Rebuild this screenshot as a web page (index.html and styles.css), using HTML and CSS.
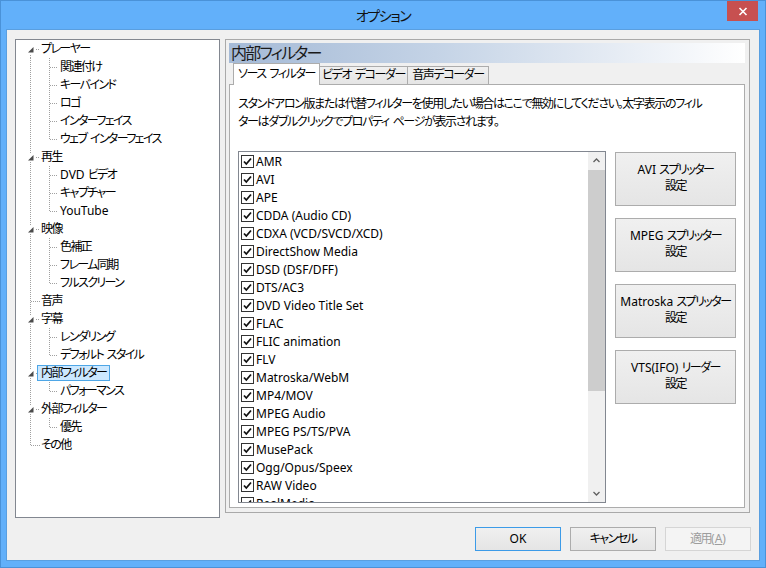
FILE: index.html
```html
<!DOCTYPE html>
<html lang="ja">
<head>
<meta charset="utf-8">
<title>オプション</title>
<link rel="stylesheet" href="styles.css">
</head>
<body>
<div class="window">
  <div class="titlebar">
    <div class="title">オプション</div>
    <div class="close"><svg width="10" height="9" viewBox="0 0 10 9"><path d="M1.5 1 L8.5 8 M8.5 1 L1.5 8" stroke="#fff" stroke-width="1.6" fill="none"/></svg></div>
  </div>
  <div class="client">
    <div class="main">
      <ul class="tree">
        <li class="first"><span class="exp"><svg width="9" height="9" viewBox="0 0 9 9"><polygon points="7.5,2 7.5,7.5 2,7.5" fill="#4a4a4a"/></svg></span><span class="label">プレーヤー</span></li>
        <li class="child"><span class="label">関連付け</span></li>
        <li class="child"><span class="label">キーバインド</span></li>
        <li class="child"><span class="label">ロゴ</span></li>
        <li class="child"><span class="label">インターフェイス</span></li>
        <li class="child end"><span class="label">ウェブ インターフェイス</span></li>
        <li class="parent"><span class="exp"><svg width="9" height="9" viewBox="0 0 9 9"><polygon points="7.5,2 7.5,7.5 2,7.5" fill="#4a4a4a"/></svg></span><span class="label">再生</span></li>
        <li class="child"><span class="label"><span class="en">DVD </span>ビデオ</span></li>
        <li class="child"><span class="label">キャプチャー</span></li>
        <li class="child end"><span class="label en">YouTube</span></li>
        <li class="parent"><span class="exp"><svg width="9" height="9" viewBox="0 0 9 9"><polygon points="7.5,2 7.5,7.5 2,7.5" fill="#4a4a4a"/></svg></span><span class="label">映像</span></li>
        <li class="child"><span class="label">色補正</span></li>
        <li class="child"><span class="label">フレーム同期</span></li>
        <li class="child end"><span class="label">フルスクリーン</span></li>
        <li class="leaf"><span class="label">音声</span></li>
        <li class="parent"><span class="exp"><svg width="9" height="9" viewBox="0 0 9 9"><polygon points="7.5,2 7.5,7.5 2,7.5" fill="#4a4a4a"/></svg></span><span class="label">字幕</span></li>
        <li class="child"><span class="label">レンダリング</span></li>
        <li class="child end"><span class="label">デフォルト スタイル</span></li>
        <li class="parent"><span class="exp"><svg width="9" height="9" viewBox="0 0 9 9"><polygon points="7.5,2 7.5,7.5 2,7.5" fill="#4a4a4a"/></svg></span><span class="label selected">内部フィルター</span></li>
        <li class="child end"><span class="label">パフォーマンス</span></li>
        <li class="parent"><span class="exp"><svg width="9" height="9" viewBox="0 0 9 9"><polygon points="7.5,2 7.5,7.5 2,7.5" fill="#4a4a4a"/></svg></span><span class="label">外部フィルター</span></li>
        <li class="child end"><span class="label">優先</span></li>
        <li class="leaf last"><span class="label">その他</span></li>
      </ul>
      <div class="page">
        <div class="page-header">内部フィルター</div>
        <div class="tabs">
          <div class="tab active">ソース フィルター</div>
          <div class="tab t2">ビデオ デコーダー</div>
          <div class="tab t3">音声デコーダー</div>
        </div>
        <div class="tabpanel">
          <p class="desc">スタンドアロン版または代替フィルターを使用したい場合はここで無効にしてください。太字表示のフィル<br>ターはダブルクリックでプロパティ ページが表示されます。</p>
          <div class="filters">
            <div class="listbox">
              <ul class="items">
                <li><span class="cb"><svg width="11" height="11" viewBox="0 0 11 11"><path d="M2 5.5 L4.3 8 L9 2.5" stroke="#111" stroke-width="1.8" fill="none"/></svg></span>AMR</li>
                <li><span class="cb"><svg width="11" height="11" viewBox="0 0 11 11"><path d="M2 5.5 L4.3 8 L9 2.5" stroke="#111" stroke-width="1.8" fill="none"/></svg></span>AVI</li>
                <li><span class="cb"><svg width="11" height="11" viewBox="0 0 11 11"><path d="M2 5.5 L4.3 8 L9 2.5" stroke="#111" stroke-width="1.8" fill="none"/></svg></span>APE</li>
                <li><span class="cb"><svg width="11" height="11" viewBox="0 0 11 11"><path d="M2 5.5 L4.3 8 L9 2.5" stroke="#111" stroke-width="1.8" fill="none"/></svg></span>CDDA (Audio CD)</li>
                <li><span class="cb"><svg width="11" height="11" viewBox="0 0 11 11"><path d="M2 5.5 L4.3 8 L9 2.5" stroke="#111" stroke-width="1.8" fill="none"/></svg></span>CDXA (VCD/SVCD/XCD)</li>
                <li><span class="cb"><svg width="11" height="11" viewBox="0 0 11 11"><path d="M2 5.5 L4.3 8 L9 2.5" stroke="#111" stroke-width="1.8" fill="none"/></svg></span>DirectShow Media</li>
                <li><span class="cb"><svg width="11" height="11" viewBox="0 0 11 11"><path d="M2 5.5 L4.3 8 L9 2.5" stroke="#111" stroke-width="1.8" fill="none"/></svg></span>DSD (DSF/DFF)</li>
                <li><span class="cb"><svg width="11" height="11" viewBox="0 0 11 11"><path d="M2 5.5 L4.3 8 L9 2.5" stroke="#111" stroke-width="1.8" fill="none"/></svg></span>DTS/AC3</li>
                <li><span class="cb"><svg width="11" height="11" viewBox="0 0 11 11"><path d="M2 5.5 L4.3 8 L9 2.5" stroke="#111" stroke-width="1.8" fill="none"/></svg></span>DVD Video Title Set</li>
                <li><span class="cb"><svg width="11" height="11" viewBox="0 0 11 11"><path d="M2 5.5 L4.3 8 L9 2.5" stroke="#111" stroke-width="1.8" fill="none"/></svg></span>FLAC</li>
                <li><span class="cb"><svg width="11" height="11" viewBox="0 0 11 11"><path d="M2 5.5 L4.3 8 L9 2.5" stroke="#111" stroke-width="1.8" fill="none"/></svg></span>FLIC animation</li>
                <li><span class="cb"><svg width="11" height="11" viewBox="0 0 11 11"><path d="M2 5.5 L4.3 8 L9 2.5" stroke="#111" stroke-width="1.8" fill="none"/></svg></span>FLV</li>
                <li><span class="cb"><svg width="11" height="11" viewBox="0 0 11 11"><path d="M2 5.5 L4.3 8 L9 2.5" stroke="#111" stroke-width="1.8" fill="none"/></svg></span>Matroska/WebM</li>
                <li><span class="cb"><svg width="11" height="11" viewBox="0 0 11 11"><path d="M2 5.5 L4.3 8 L9 2.5" stroke="#111" stroke-width="1.8" fill="none"/></svg></span>MP4/MOV</li>
                <li><span class="cb"><svg width="11" height="11" viewBox="0 0 11 11"><path d="M2 5.5 L4.3 8 L9 2.5" stroke="#111" stroke-width="1.8" fill="none"/></svg></span>MPEG Audio</li>
                <li><span class="cb"><svg width="11" height="11" viewBox="0 0 11 11"><path d="M2 5.5 L4.3 8 L9 2.5" stroke="#111" stroke-width="1.8" fill="none"/></svg></span>MPEG PS/TS/PVA</li>
                <li><span class="cb"><svg width="11" height="11" viewBox="0 0 11 11"><path d="M2 5.5 L4.3 8 L9 2.5" stroke="#111" stroke-width="1.8" fill="none"/></svg></span>MusePack</li>
                <li><span class="cb"><svg width="11" height="11" viewBox="0 0 11 11"><path d="M2 5.5 L4.3 8 L9 2.5" stroke="#111" stroke-width="1.8" fill="none"/></svg></span>Ogg/Opus/Speex</li>
                <li><span class="cb"><svg width="11" height="11" viewBox="0 0 11 11"><path d="M2 5.5 L4.3 8 L9 2.5" stroke="#111" stroke-width="1.8" fill="none"/></svg></span>RAW Video</li>
                <li><span class="cb"><svg width="11" height="11" viewBox="0 0 11 11"><path d="M2 5.5 L4.3 8 L9 2.5" stroke="#111" stroke-width="1.8" fill="none"/></svg></span>RealMedia</li>
              </ul>
              <div class="scrollbar">
                <div class="sb-btn"><svg width="7" height="5" viewBox="0 0 7 5"><polyline points="0.5,4 3.5,1 6.5,4" stroke="#606060" stroke-width="1.3" fill="none"/></svg></div>
                <div class="sb-track"><div class="sb-thumb"></div></div>
                <div class="sb-btn"><svg width="7" height="5" viewBox="0 0 7 5"><polyline points="0.5,1 3.5,4 6.5,1" stroke="#606060" stroke-width="1.3" fill="none"/></svg></div>
              </div>
            </div>
            <div class="side-buttons">
              <div class="btn tall"><span class="en">AVI </span>スプリッター<br>設定</div>
              <div class="btn tall"><span class="en">MPEG </span>スプリッター<br>設定</div>
              <div class="btn tall"><span class="en">Matroska </span>スプリッター<br>設定</div>
              <div class="btn tall"><span class="en">VTS(IFO) </span>リーダー<br>設定</div>
            </div>
          </div>
        </div>
      </div>
    </div>
    <div class="footer">
      <div class="btn dlg default en">OK</div>
      <div class="btn dlg">キャンセル</div>
      <div class="btn dlg disabled">適用<span class="en">(<u>A</u>)</span></div>
    </div>
  </div>
</div>
</body>
</html>
```
FILE: styles.css
```css
* { box-sizing: border-box; }
html, body { margin: 0; padding: 0; }
body {
  font-family: "Noto Sans", "Noto Sans CJK JP", sans-serif;
  font-size: 12px;
  color: #000;
  font-feature-settings: "palt";
  letter-spacing: -1.5px;
  word-spacing: 2px;
}
.en { letter-spacing: 0; word-spacing: 0; }
.window {
  width: 766px;
  height: 568px;
  background: #62b0fa;
  box-shadow: inset 0 0 0 1px #4a92d8;
  display: flex;
  flex-direction: column;
}
.titlebar {
  height: 30px;
  flex-shrink: 0;
  display: grid;
  grid-template-columns: 1fr auto 1fr;
}
.title {
  grid-column: 2;
  font-size: 14px;
  letter-spacing: -1.4px;
  line-height: 30px;
  padding-top: 1px;
  color: #111;
}
.close {
  grid-column: 3;
  justify-self: end;
  align-self: start;
  width: 31px;
  height: 20px;
  margin: 1px 8px 0 0;
  background: #c75050;
  display: flex;
  align-items: center;
  justify-content: center;
}
.client {
  flex: 1;
  margin: 0 7px 8px 7px;
  background: #f0f0f0;
  padding: 9px 9px 0 8px;
  display: flex;
  flex-direction: column;
  box-shadow: 0 0 0 1px #5a9fe0;
}
.main {
  display: flex;
  align-items: flex-start;
  gap: 5px;
}
/* tree */
.tree {
  --vl: repeating-linear-gradient(to bottom, #a0a0a0 0 1px, transparent 1px 2px);
  --hl: repeating-linear-gradient(to right, #a0a0a0 0 1px, transparent 1px 2px);
  list-style: none;
  margin: 0;
  padding: 0;
  width: 205px;
  height: 479px;
  border: 1px solid #828790;
  background: #fff;
  letter-spacing: -1.6px;
}
.tree li {
  height: 18px;
  display: flex;
  align-items: center;
  background-repeat: no-repeat;
  white-space: nowrap;
}
.tree .first {
  background-image: var(--vl), var(--hl);
  background-position: 14px 9px, 20px 9px;
  background-size: 1px 9px, 4px 1px;
}
.tree .parent {
  background-image: var(--vl), var(--hl);
  background-position: 14px 0, 20px 9px;
  background-size: 1px 18px, 4px 1px;
}
.tree .leaf {
  background-image: var(--vl), var(--hl);
  background-position: 14px 0, 15px 9px;
  background-size: 1px 18px, 9px 1px;
}
.tree .leaf.last {
  background-size: 1px 10px, 9px 1px;
}
.tree .child {
  background-image: var(--vl), var(--vl), var(--hl);
  background-position: 14px 0, 33px 0, 34px 9px;
  background-size: 1px 18px, 1px 18px, 8px 1px;
}
.tree .child.end {
  background-size: 1px 18px, 1px 10px, 8px 1px;
}
.exp {
  width: 9px;
  height: 9px;
  margin-left: 10px;
  background: #fff;
  display: flex;
}
.label {
  padding: 0 3px;
  border: 1px solid transparent;
  line-height: 14px;
}
.first .label, .parent .label { margin-left: 2px; }
.leaf .label { margin-left: 21px; }
.child .label { margin-left: 40px; }
.label.selected {
  background: #cce8ff;
  border-color: #4ea6e6;
}
/* right page */
.page {
  width: 525px;
  height: 474px;
  border: 1px solid #a9a9a9;
  padding: 3px 4px 4px 3px;
  display: flex;
  flex-direction: column;
}
.page-header {
  height: 20px;
  flex-shrink: 0;
  font-size: 16px;
  letter-spacing: -1.8px;
  line-height: 20px;
  padding-left: 2px;
  color: #1a1a1a;
  background: linear-gradient(to right, #a5bad6 0%, #c4d3e6 40%, #e6ecf4 75%, #ffffff 100%);
}
.tabs {
  height: 21px;
  flex-shrink: 0;
  display: flex;
  align-items: flex-end;
  padding-left: 4px;
  letter-spacing: -1.4px;
}
.tab {
  height: 18px;
  border: 1px solid #acacac;
  border-bottom: 0;
  background: linear-gradient(#f0f0f0, #e5e5e5);
  line-height: 16px;
  text-align: center;
  white-space: nowrap;
}
.tab.active {
  width: 87px;
  height: 22px;
  margin-bottom: -1px;
  background: #fff;
  line-height: 19px;
  position: relative;
  z-index: 1;
}
.tab.t2 { width: 89px; margin-left: -1px; }
.tab.t3 { width: 82px; margin-left: -1px; }
.tabpanel {
  flex: 1;
  border: 1px solid #acacac;
  background: #fff;
  padding: 10px 8px 4px 8px;
}
.desc {
  margin: 0;
  line-height: 18px;
  white-space: nowrap;
  letter-spacing: -1.35px;
}
.filters {
  margin-top: 20px;
  display: flex;
  align-items: flex-start;
}
.listbox {
  width: 368px;
  height: 352px;
  border: 1px solid #828790;
  display: flex;
  background: #fff;
}
.items {
  flex: 1;
  list-style: none;
  margin: 0;
  padding: 0 0 0 2px;
  overflow: hidden;
  letter-spacing: 0;
  word-spacing: 0;
}
.items li {
  height: 18px;
  display: flex;
  align-items: center;
  white-space: nowrap;
}
.cb {
  width: 13px;
  height: 13px;
  border: 1px solid #333;
  background: #fff;
  margin-right: 2px;
  display: flex;
}
.scrollbar {
  width: 17px;
  background: #f0f0f0;
  display: flex;
  flex-direction: column;
}
.sb-btn {
  height: 17px;
  display: flex;
  align-items: center;
  justify-content: center;
}
.sb-track { flex: 1; padding-top: 1px; }
.sb-thumb { height: 221px; background: #cdcdcd; }
.side-buttons {
  margin-left: 9px;
  margin-top: 1px;
  display: flex;
  flex-direction: column;
  gap: 12px;
}
.btn {
  border: 1px solid #acacac;
  background: linear-gradient(#f0f0f0, #e5e5e5);
  text-align: center;
  color: #000;
}
.btn.tall {
  width: 121px;
  height: 54px;
  line-height: 16px;
  padding-top: 9px;
  white-space: nowrap;
}
/* footer */
.footer {
  margin-top: 9px;
  margin-right: -1px;
  display: flex;
  justify-content: flex-end;
  gap: 9px;
}
.btn.dlg {
  width: 86px;
  height: 24px;
  line-height: 22px;
}
.btn.default { border-color: #3c9be8; }
.btn.disabled {
  border-color: #d5d5d5;
  background: #f4f4f4;
  color: #9d9d9d;
}
```
